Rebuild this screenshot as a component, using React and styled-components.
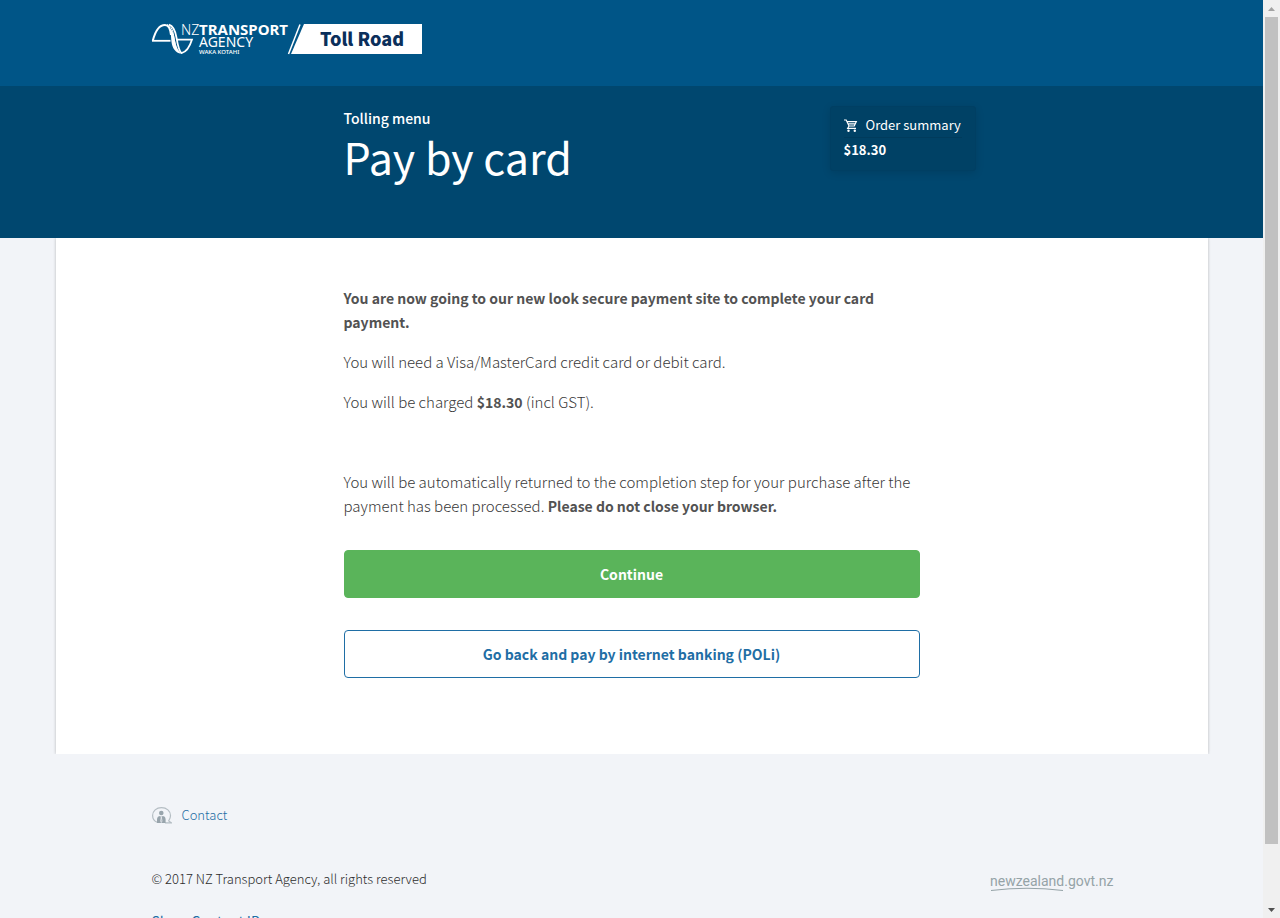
import React from "react";
import styled, { createGlobalStyle } from "styled-components";

const GlobalStyle = createGlobalStyle`
  *, *::before, *::after { box-sizing: border-box; }
  body {
    margin: 0;
    background: #f2f4f8;
    color: #525252;
    font-family: "Noto Sans CJK SC", "Noto Sans", sans-serif;
    font-size: 14px;
    line-height: 24px;
  }
  h1, p { margin: 0; }
  a { text-decoration: none; }
`;

const Window = styled.div`
  display: grid;
  grid-template-columns: minmax(0, 1fr) 17px;
  height: 100vh;
  overflow: hidden;
`;

const Page = styled.div`
  min-width: 0;
  overflow: hidden;
`;

const Container = styled.div`
  width: 100%;
  max-width: ${(p) => p.$width}px;
  margin: 0 auto;
`;

const Header = styled.header`
  background: #005587;
  padding: 24px 0 32px;
`;

const LogoLink = styled.a`
  display: block;
  width: 270px;
  height: 30px;

  svg { overflow: visible; }
`;

const Hero = styled.div`
  background: #00476f;
  padding: 20px 0 56px;
`;

const HeroRow = styled.div`
  display: flex;
  align-items: flex-start;
  justify-content: space-between;
`;

const HeroLink = styled.a`
  display: block;
  color: #fff;
  font-weight: 500;
`;

const Title = styled.h1`
  color: #fff;
  font-size: 43px;
  font-weight: 400;
  line-height: 52px;
`;

const Summary = styled.aside`
  width: 146px;
  margin-right: -56px;
  padding: 6px 13px 8px;
  border: 1px solid #003f63;
  border-radius: 3px;
  background: #004165;
  box-shadow: 0 2px 8px rgba(0, 0, 0, 0.12);
  color: #fff;
  font-size: 13px;
`;

const SummaryHeading = styled.p`
  display: flex;
  align-items: center;
  gap: 8px;
  border-bottom: 1px solid #003b5c;
  font-weight: 400;
  white-space: nowrap;
`;

const Amount = styled.p`
  font-weight: 700;
`;

const Panel = styled.main`
  width: calc(100% - 110px);
  max-width: 1152px;
  margin: 0 auto;
  padding: 48px 0 76px;
  background: #fff;
  box-shadow: 0 0 3px rgba(0, 0, 0, 0.25);
  clip-path: inset(0 -3px);
`;

const Paragraph = styled.p`
  margin-bottom: ${(p) => p.$gap || 16}px;
  color: #383838;
  font-size: 15px;
  font-weight: 300;

  strong {
    color: #525252;
    font-size: 14px;
    font-weight: 700;
  }
`;

const Button = styled.button`
  display: block;
  width: 100%;
  height: 48px;
  margin-bottom: ${(p) => (p.$primary ? 32 : 0)}px;
  border: 1px solid ${(p) => (p.$primary ? "#5ab45a" : "#1f6ea5")};
  border-radius: 4px;
  background: ${(p) => (p.$primary ? "#5ab45a" : "#fff")};
  color: ${(p) => (p.$primary ? "#fff" : "#1f6ea5")};
  font: inherit;
  font-weight: 700;
`;

const Footer = styled.footer`
  padding-top: 49px;
  font-size: 13px;
  font-weight: 300;

  a { color: #1f6ea5; }
`;

const ContactLink = styled.a`
  display: flex;
  align-items: center;
  gap: 10px;
  width: fit-content;
`;

const FooterRow = styled.div`
  display: flex;
  align-items: flex-end;
  justify-content: space-between;
  margin: 40px 0 18px;
  color: #2c2c2c;

  svg { overflow: visible; }
`;

const ContentLink = styled.a`
  font-size: 14px;
  font-weight: 400;
`;

const Track = styled.div`
  display: grid;
  grid-template-rows: 17px minmax(0, 1fr) 17px;
  justify-items: center;
  background: #f0f0f0;
`;

const Thumb = styled.div`
  width: 13px;
  height: calc(100% - 57px);
  background: #c1c1c1;
`;

const Arrow = ({ down }) => (
  <svg width="17" height="17" aria-hidden="true">
    <path d={down ? "M5 7h7L8.500 11z" : "M5 11h7L8.500 7z"} fill={down ? "#505050" : "#a3a3a3"} />
  </svg>
);

const Logo = () => (
  <svg width="270" height="30" viewBox="0 0 270 30" role="img" aria-label="NZ Transport Agency Toll Road">
    <g fill="none" stroke="#fff">
      <path d="M.8 16.800C3 8 7 1 13 1c4 0 5.500 5 6 10" strokeWidth="2" />
      <path d="M0 16.800h18.500" strokeWidth="1.800" />
      <path d="M17 .6c5 1.500 6.500 7 7.500 13s2 13 5 15.500c5-1 8.500-7 10.500-13.500H25.500" strokeWidth="1.800" />
      <path d="M15 .6c5 1.500 6 7 7 13s2 12 6 15" strokeWidth="1" />
    </g>
    <path d="M17.500 4c1.500 4 1.500 10 2 14 .8 6 4 11 9.500 11.800-4-3.800-5.500-9.800-6.500-15.800-.8-4-2-8-5-10z" fill="#fff" />
    <g fill="#fff" fontFamily="'Noto Sans', sans-serif">
      <text x="29" y="11" fontSize="14" fontWeight="300">NZ</text>
      <text x="47" y="11" fontSize="15" fontWeight="700">TRANSPORT</text>
      <text x="47" y="23" fontSize="14">AGENCY</text>
      <text x="47" y="30" fontSize="6" fontWeight="500">WAKA KOTAHI</text>
    </g>
    <path d="M148 .5 136.500 30" stroke="#fff" strokeWidth="1.500" />
    <path d="M152 0h118v30H139z" fill="#fff" />
    <text x="168" y="22" fontSize="18" fontWeight="900" fill="#0b2f5b" fontFamily="'Noto Sans CJK SC', sans-serif">
      Toll Road
    </text>
  </svg>
);

const Cart = () => (
  <svg width="14" height="14" viewBox="0 0 14 14" fill="none" stroke="#fff" strokeWidth="1.200" aria-hidden="true">
    <path d="M0 2h2.200l2.800 6h5.300l2-4.300H3.200M4 5.800h7M5 8l-1.300 2.300H12" />
    <circle cx="4.500" cy="12.700" r="1.200" fill="#fff" stroke="none" />
    <circle cx="10.800" cy="12.700" r="1.200" fill="#fff" stroke="none" />
  </svg>
);

const ContactIcon = () => (
  <svg width="20" height="17" viewBox="0 0 20 17" aria-hidden="true">
    <path d="M5 15.300A7.500 7.500 0 0 1 .6 8.500C.6 4 4.400.6 9.500.6s9 3.400 9 7.900c0 2.500-.8 4-1.800 5.400l2.800 1.900H13" fill="none" stroke="#b4bdc3" strokeWidth="1.200" />
    <circle cx="9.300" cy="6" r="2.300" fill="#98a4ac" />
    <path d="M5 16v-3.500C5 10 6.500 9 8.300 9h2c2 0 3.300 1 3.300 3.500V16z" fill="#98a4ac" />
    <path d="m8.400 9 .9 1 .9-1M9.300 10l-.7 4 .7 1.500.7-1.500z" stroke="#f2f4f8" strokeWidth=".7" fill="none" />
  </svg>
);

const GovtLogo = () => (
  <svg width="122" height="20" viewBox="0 0 122 20" role="img" aria-label="newzealand.govt.nz">
    <text x="0" y="15" fontSize="14" fontWeight="400" fill="#95a3a7" fontFamily="Roboto, sans-serif">newzealand.govt.nz</text>
    <path d="M1 19.500Q37 15 73 19.500" fill="none" stroke="#95a3a7" />
  </svg>
);

export default function App() {
  return (
    <>
      <GlobalStyle />
      <Window>
        <Page>
          <Header>
            <Container $width={960}>
              <LogoLink href="#"><Logo /></LogoLink>
            </Container>
          </Header>
          <Hero>
            <Container $width={576}>
              <HeroRow>
                <div>
                  <HeroLink href="#">Tolling menu</HeroLink>
                  <Title>Pay by card</Title>
                </div>
                <Summary>
                  <SummaryHeading><Cart />Order summary</SummaryHeading>
                  <Amount>$18.30</Amount>
                </Summary>
              </HeroRow>
            </Container>
          </Hero>
          <Panel>
            <Container $width={576}>
              <Paragraph>
                <strong>You are now going to our new look secure payment site to complete your card payment.</strong>
              </Paragraph>
              <Paragraph>You will need a Visa/MasterCard credit card or debit card.</Paragraph>
              <Paragraph $gap={56}>You will be charged <strong>$18.30</strong> (incl GST).</Paragraph>
              <Paragraph $gap={32}>
                You will be automatically returned to the completion step for your purchase after the payment has been
                processed. <strong>Please do not close your browser.</strong>
              </Paragraph>
              <Button type="button" $primary>Continue</Button>
              <Button type="button">Go back and pay by internet banking (POLi)</Button>
            </Container>
          </Panel>
          <Footer>
            <Container $width={960}>
              <ContactLink href="#"><ContactIcon />Contact</ContactLink>
              <FooterRow>
                <p>© 2017 NZ Transport Agency, all rights reserved</p>
                <GovtLogo />
              </FooterRow>
              <ContentLink href="#">Show Content ID</ContentLink>
            </Container>
          </Footer>
        </Page>
        <Track aria-hidden="true">
          <Arrow />
          <Thumb />
          <Arrow down />
        </Track>
      </Window>
    </>
  );
}
